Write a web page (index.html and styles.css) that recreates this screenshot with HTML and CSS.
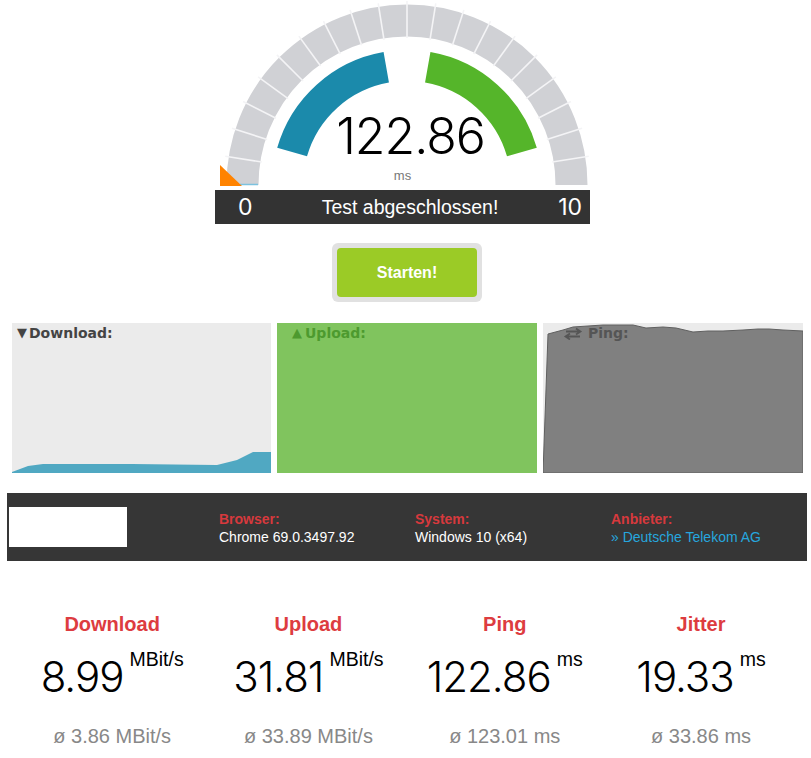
FILE: index.html
```html
<!DOCTYPE html>
<html lang="de">
<head>
<meta charset="utf-8">
<title>Speedtest</title>
<link rel="stylesheet" href="styles.css">
</head>
<body>
<div class="page">
  <section class="gauge-wrap">
    <div class="gauge">
      <svg class="gauge-svg" viewBox="0 0 375 190" width="375" height="190" aria-hidden="true">
        <path d="M 27.5 185 A 164.5 164.5 0 0 1 356.5 185" fill="none" stroke="#d0d1d5" stroke-width="32"/>
        <g stroke="#f4f4f6" stroke-width="1.6">
          <line x1="45" y1="185" x2="8" y2="185" transform="rotate(9 192 185)"/>
          <line x1="45" y1="185" x2="8" y2="185" transform="rotate(18 192 185)"/>
          <line x1="45" y1="185" x2="8" y2="185" transform="rotate(27 192 185)"/>
          <line x1="45" y1="185" x2="8" y2="185" transform="rotate(36 192 185)"/>
          <line x1="45" y1="185" x2="8" y2="185" transform="rotate(45 192 185)"/>
          <line x1="45" y1="185" x2="8" y2="185" transform="rotate(54 192 185)"/>
          <line x1="45" y1="185" x2="8" y2="185" transform="rotate(63 192 185)"/>
          <line x1="45" y1="185" x2="8" y2="185" transform="rotate(72 192 185)"/>
          <line x1="45" y1="185" x2="8" y2="185" transform="rotate(81 192 185)"/>
          <line x1="45" y1="185" x2="8" y2="185" transform="rotate(90 192 185)"/>
          <line x1="45" y1="185" x2="8" y2="185" transform="rotate(99 192 185)"/>
          <line x1="45" y1="185" x2="8" y2="185" transform="rotate(108 192 185)"/>
          <line x1="45" y1="185" x2="8" y2="185" transform="rotate(117 192 185)"/>
          <line x1="45" y1="185" x2="8" y2="185" transform="rotate(126 192 185)"/>
          <line x1="45" y1="185" x2="8" y2="185" transform="rotate(135 192 185)"/>
          <line x1="45" y1="185" x2="8" y2="185" transform="rotate(144 192 185)"/>
          <line x1="45" y1="185" x2="8" y2="185" transform="rotate(153 192 185)"/>
          <line x1="45" y1="185" x2="8" y2="185" transform="rotate(162 192 185)"/>
          <line x1="45" y1="185" x2="8" y2="185" transform="rotate(171 192 185)"/>
        </g>
        <path d="M 77.1 152.1 A 119.5 119.5 0 0 1 171.25 67.3" fill="none" stroke="#1b8aab" stroke-width="31"/>
        <path d="M 212.75 67.3 A 119.5 119.5 0 0 1 306.9 152.1" fill="none" stroke="#55b52a" stroke-width="31"/>
        <line x1="25" y1="184.5" x2="43" y2="184.5" stroke="#7cc2df" stroke-width="1.5"/>
        <polygon points="5,165 5,186 27,186" fill="#ff8300"/>
      </svg>
      <div class="gauge-value">122.86</div>
      <div class="gauge-unit">ms</div>
    </div>
    <div class="gauge-bar">
      <span class="bar-min">0</span>
      <span class="bar-status">Test abgeschlossen!</span>
      <span class="bar-max">10</span>
    </div>
  </section>

  <div class="start-wrap">
    <button class="start-btn" type="button">Starten!</button>
  </div>

  <section class="charts">
    <div class="chart chart-down">
      <svg class="chart-svg" viewBox="0 0 259 150" preserveAspectRatio="none" aria-hidden="true">
        <polygon points="0,150 0,149 16,143 31,141 120,141 205,142 225,137 241,129 259,129 259,150" fill="#50a8c2"/>
      </svg>
      <div class="chart-label label-down"><span class="tri">▼</span>Download:</div>
    </div>
    <div class="chart chart-up">
      <div class="chart-label label-up"><span class="tri tri-up">▲</span>Upload:</div>
    </div>
    <div class="chart chart-ping">
      <svg class="chart-svg" viewBox="0 0 260 150" preserveAspectRatio="none" aria-hidden="true">
        <polygon points="0,150 5,11 20,7 30,4 45,3 60,2 90,2 103,5 120,4 133,5 150,9 165,8 180,8 200,7 215,6 226,6 240,7 260,8 260,150" fill="#808080" stroke="#606060" stroke-width="1"/>
      </svg>
      <div class="chart-label label-ping">
        <svg class="ping-icon" viewBox="0 0 20 13" width="20" height="13" aria-hidden="true">
          <path d="M3 4.5 H17 M13 1.5 L17.5 4.5 L13 7.5 M17 9.5 H3 M7 6.5 L2.5 9.5 L7 12.5" fill="none" stroke="#555" stroke-width="1.8"/>
        </svg>Ping:</div>
    </div>
  </section>

  <section class="info">
    <div class="info-logo"></div>
    <div class="info-item">
      <div class="info-label">Browser:</div>
      <div class="info-value">Chrome 69.0.3497.92</div>
    </div>
    <div class="info-item">
      <div class="info-label">System:</div>
      <div class="info-value">Windows 10 (x64)</div>
    </div>
    <div class="info-item">
      <div class="info-label">Anbieter:</div>
      <div class="info-value info-link">» Deutsche Telekom AG</div>
    </div>
  </section>

  <section class="results">
    <div class="result">
      <div class="res-title">Download</div>
      <div class="res-value"><span class="res-num">8.99</span><span class="res-unit">MBit/s</span></div>
      <div class="res-avg">ø 3.86 MBit/s</div>
    </div>
    <div class="result">
      <div class="res-title">Upload</div>
      <div class="res-value"><span class="res-num">31.81</span><span class="res-unit">MBit/s</span></div>
      <div class="res-avg">ø 33.89 MBit/s</div>
    </div>
    <div class="result">
      <div class="res-title">Ping</div>
      <div class="res-value"><span class="res-num">122.86</span><span class="res-unit">ms</span></div>
      <div class="res-avg">ø 123.01 ms</div>
    </div>
    <div class="result">
      <div class="res-title">Jitter</div>
      <div class="res-value"><span class="res-num">19.33</span><span class="res-unit">ms</span></div>
      <div class="res-avg">ø 33.86 ms</div>
    </div>
  </section>
</div>
</body>
</html>
```
FILE: styles.css
```css
* { box-sizing: border-box; }
html, body { margin: 0; padding: 0; background: #fff; }
body {
  font-family: "Liberation Sans", Arial, sans-serif;
  color: #000;
  width: 811px;
}
.page { width: 811px; }

/* gauge */
.gauge-wrap { width: 375px; margin-left: 215px; }
.gauge { position: relative; height: 190px; }
.gauge-svg { position: absolute; left: 0; top: 0; display: block; }
.gauge-value {
  position: relative;
  padding-top: 116px;
  padding-left: 16px;
  text-align: center;
  font-family: "Inter", "DejaVu Sans", sans-serif;
  font-weight: 300;
  font-size: 50px;
  line-height: 40px;
  letter-spacing: -1px;
}
.gauge-unit {
  position: relative;
  text-align: center;
  font-size: 13px;
  color: #777;
  line-height: 16px;
  margin-top: 12px;
}
.gauge-bar {
  display: grid;
  grid-template-columns: 1fr auto 1fr;
  align-items: center;
  height: 34px;
  background: #333;
  color: #fff;
  padding: 0 8px 0 23px;
}
.bar-min, .bar-max {
  font-family: "Inter", "DejaVu Sans", sans-serif;
  font-weight: 400;
  font-size: 23px;
  line-height: 1;
}
.bar-max { justify-self: end; }
.bar-status { font-size: 19.5px; }

/* start button */
.start-wrap {
  width: 150px;
  margin: 19px 0 0 332px;
  padding: 5px;
  background: #e1e1e1;
  border-radius: 6px;
}
.start-btn {
  display: block;
  width: 140px;
  height: 49px;
  border: 0;
  border-radius: 4px;
  background: #9bcb26;
  color: #fff;
  font-family: "Liberation Sans", Arial, sans-serif;
  font-weight: bold;
  font-size: 16px;
  padding: 0;
}

/* charts */
.charts {
  display: grid;
  grid-template-columns: 259px 260px 260px;
  column-gap: 6px;
  margin: 21px 0 0 12px;
}
.chart { position: relative; height: 150px; overflow: hidden; }
.chart-down { background: #ebebeb; }
.chart-up { background: #80c45e; }
.chart-ping { background: #ebebeb; }
.chart-svg { position: absolute; left: 0; top: 0; width: 100%; height: 100%; display: block; }
.chart-label {
  position: relative;
  font-family: "DejaVu Sans", sans-serif;
  font-weight: bold;
  font-size: 14px;
  line-height: 18px;
  padding-top: 1px;
  display: flex;
  align-items: center;
}
.label-down { color: #444; padding-left: 5px; }
.label-up { color: #4d9a2f; padding-left: 15px; }
.label-ping { color: #555; padding-left: 20px; }
.tri { font-size: 13px; margin-right: 2px; }
.tri-up { margin-right: 3px; }
.ping-icon { margin-right: 5px; }

/* info bar */
.info {
  display: grid;
  grid-template-columns: 210px 196px 196px 1fr;
  align-items: center;
  height: 68px;
  margin: 20px 4px 0 7px;
  padding-left: 2px;
  background: #363636;
}
.info-logo { width: 118px; height: 40px; background: #fff; }
.info-item { font-size: 14px; line-height: 18px; padding-top: 1px; }
.info-label { color: #d7393d; font-weight: bold; }
.info-value { color: #fff; }
.info-link { color: #26a6de; }

/* results */
.results {
  display: grid;
  grid-template-columns: repeat(4, 196.3px);
  margin: 51px 0 0 14px;
}
.result { text-align: center; }
.res-title {
  color: #dd3c40;
  font-weight: bold;
  font-size: 20px;
  line-height: 24px;
}
.res-value {
  display: flex;
  justify-content: center;
  align-items: flex-start;
  margin-top: 19px;
  height: 44px;
}
.res-num {
  font-family: "Inter", "DejaVu Sans", sans-serif;
  font-weight: 300;
  font-size: 42px;
  line-height: 44px;
  letter-spacing: -1px;
}
.res-unit {
  font-size: 19.5px;
  line-height: 20px;
  margin-left: 6px;
  margin-top: -6px;
}
.res-avg {
  color: #888;
  font-size: 20px;
  line-height: 24px;
  margin-top: 25px;
}
```
